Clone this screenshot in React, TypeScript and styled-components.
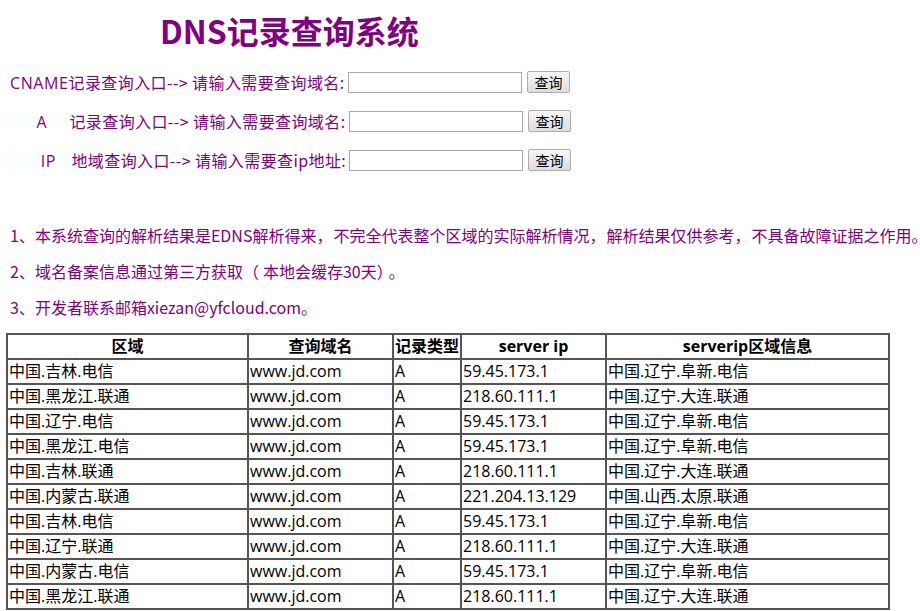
import React from "react";
import styled, { createGlobalStyle } from "styled-components";

const Global = createGlobalStyle`
  html, body { margin: 0; padding: 0; background: #fff; }
  body {
    font-family: "Open Sans", "Noto Sans CJK SC", sans-serif;
    font-size: 16px;
    color: #800080;
  }
`;

const Page = styled.div`
  width: 920px;
  height: 611px;
  overflow: hidden;
  display: flex;
  flex-direction: column;
`;

const Title = styled.h1`
  margin: 8px 0 0 160px;
  font-family: "Noto Sans CJK SC", sans-serif;
  font-size: 32px;
  font-weight: 700;
  line-height: 44px;
  color: #800080;
`;

const Form = styled.div`
  display: flex;
  flex-direction: column;
  gap: 17px;
  margin-top: 19px;
  padding-left: 10px;
`;

const Row = styled.div`
  display: flex;
  align-items: center;
  height: 22px;
  white-space: nowrap;
`;

const Label = styled.span`
  width: 334px;
  font-family: "Noto Sans CJK SC", sans-serif;
  font-size: 16px;
  line-height: 22px;
  letter-spacing: 0.4px;
  color: #800080;
`;

const Latin = styled.span`
  font-family: "Open Sans", sans-serif;
  letter-spacing: 0.6px;
`;

const Ghost = styled(Latin)`
  color: #f0ffff;
  letter-spacing: 1px;
`;

const Input = styled.input<{ $ml: number }>`
  box-sizing: border-box;
  width: 174px;
  height: 21px;
  margin-left: ${(p) => p.$ml}px;
  border: 1px solid #a9a9a9;
  padding: 1px 2px;
  background: #fff;
`;

const Button = styled.button`
  box-sizing: border-box;
  width: 43px;
  height: 22px;
  margin-left: 5px;
  padding: 0;
  border: 1px solid #adadad;
  border-radius: 2px;
  background: linear-gradient(#f6f6f6, #dddddd);
  font-family: "Noto Sans CJK SC", sans-serif;
  font-size: 14px;
  color: #000;
  line-height: 18px;
`;

const Notes = styled.div`
  display: flex;
  flex-direction: column;
  gap: 14px;
  margin-top: 53px;
  padding-left: 10px;
`;

const Note = styled.p`
  margin: 0;
  font-family: "Noto Sans CJK SC", sans-serif;
  font-size: 16px;
  line-height: 22px;
  white-space: nowrap;
  color: #800080;
`;

const Wide = styled.span<{ $s: number }>`
  letter-spacing: ${(p) => p.$s}px;
`;

const Table = styled.table`
  margin: 15px 0 0 6px;
  width: 884px;
  table-layout: fixed;
  border-collapse: separate;
  border-spacing: 0;
  border: 1px solid #555;
  font-family: "Open Sans", "Noto Sans CJK SC", sans-serif;
  font-size: 16px;
  color: #000;
`;

const Th = styled.th`
  border: 1px solid #555;
  padding: 1px;
  line-height: 21px;
  font-weight: 700;
  text-align: center;
  white-space: nowrap;
`;

const Td = styled.td`
  border: 1px solid #555;
  padding: 1px 0 1px 1px;
  line-height: 21px;
  white-space: nowrap;
  overflow: hidden;
`;

const rows: [string, string, string, string, string][] = [
  ["中国.吉林.电信", "www.jd.com", "A", "59.45.173.1", "中国.辽宁.阜新.电信"],
  ["中国.黑龙江.联通", "www.jd.com", "A", "218.60.111.1", "中国.辽宁.大连.联通"],
  ["中国.辽宁.电信", "www.jd.com", "A", "59.45.173.1", "中国.辽宁.阜新.电信"],
  ["中国.黑龙江.电信", "www.jd.com", "A", "59.45.173.1", "中国.辽宁.阜新.电信"],
  ["中国.吉林.联通", "www.jd.com", "A", "218.60.111.1", "中国.辽宁.大连.联通"],
  ["中国.内蒙古.联通", "www.jd.com", "A", "221.204.13.129", "中国.山西.太原.联通"],
  ["中国.吉林.电信", "www.jd.com", "A", "59.45.173.1", "中国.辽宁.阜新.电信"],
  ["中国.辽宁.联通", "www.jd.com", "A", "218.60.111.1", "中国.辽宁.大连.联通"],
  ["中国.内蒙古.电信", "www.jd.com", "A", "59.45.173.1", "中国.辽宁.阜新.电信"],
  ["中国.黑龙江.联通", "www.jd.com", "A", "218.60.111.1", "中国.辽宁.大连.联通"],
];

export default function App() {
  return (
    <>
      <Global />
      <Page>
        <Title>DNS记录查询系统</Title>
        <Form>
          <Row>
            <Label>
              <Latin>CNAME</Latin>记录查询入口--&gt; 请输入需要查询域名:
            </Label>
            <Input $ml={4} type="text" />
            <Button>查询</Button>
          </Row>
          <Row>
            <Label>
              <Ghost>MA</Ghost>
              <Latin>A</Latin>
              <Ghost>AA</Ghost>记录查询入口--&gt; 请输入需要查询域名:
            </Label>
            <Input $ml={5} type="text" />
            <Button>查询</Button>
          </Row>
          <Row>
            <Label>
              <Ghost>MM</Ghost>
              <Latin>IP</Latin>
              <Ghost>M</Ghost>地域查询入口--&gt; 请输入需要查ip地址:
            </Label>
            <Input $ml={5} type="text" />
            <Button>查询</Button>
          </Row>
        </Form>
        <Notes>
          <Note>
            1、本系统查询的解析结果是EDNS解析得来<Wide $s={1}>，</Wide>不完全代表整个区域的实际解析情况
            <Wide $s={1}>，</Wide>解析结果仅供参考<Wide $s={1}>，</Wide>不具备故障证据之作用。
          </Note>
          <Note>
            2、域名备案信息通过第三方获取<Wide $s={4}>（</Wide>本地会缓存30天<Wide $s={4}>）</Wide>。
          </Note>
          <Note>3、开发者联系邮箱xiezan@yfcloud.com。</Note>
        </Notes>
        <Table>
          <colgroup>
            <col style={{ width: 241 }} />
            <col style={{ width: 145 }} />
            <col style={{ width: 68 }} />
            <col style={{ width: 145 }} />
            <col />
          </colgroup>
          <thead>
            <tr>
              <Th>区域</Th>
              <Th>查询域名</Th>
              <Th>记录类型</Th>
              <Th>server ip</Th>
              <Th>serverip区域信息</Th>
            </tr>
          </thead>
          <tbody>
            {rows.map((r, i) => (
              <tr key={i}>
                {r.map((c, j) => (
                  <Td key={j}>{c}</Td>
                ))}
              </tr>
            ))}
          </tbody>
        </Table>
      </Page>
    </>
  );
}
